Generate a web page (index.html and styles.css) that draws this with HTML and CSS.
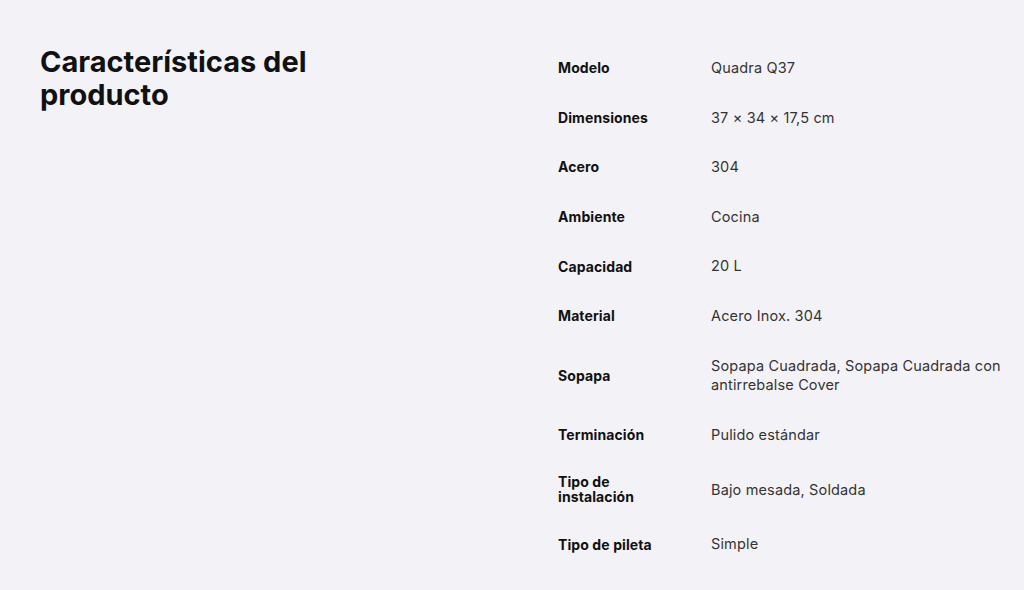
FILE: index.html
```html
<!DOCTYPE html>
<html lang="es">
<head>
<meta charset="utf-8">
<link rel="stylesheet" href="styles.css">
</head>
<body>
<main class="specs">
  <h2 class="specs-title">Características del producto</h2>
  <dl class="specs-table">
    <div class="row"><dt>Modelo</dt><dd>Quadra Q37</dd></div>
    <div class="row"><dt>Dimensiones</dt><dd>37 × 34 × 17,5 cm</dd></div>
    <div class="row"><dt>Acero</dt><dd>304</dd></div>
    <div class="row"><dt>Ambiente</dt><dd>Cocina</dd></div>
    <div class="row"><dt>Capacidad</dt><dd>20 L</dd></div>
    <div class="row"><dt>Material</dt><dd>Acero Inox. 304</dd></div>
    <div class="row"><dt>Sopapa</dt><dd>Sopapa Cuadrada, Sopapa Cuadrada con antirrebalse Cover</dd></div>
    <div class="row"><dt>Terminación</dt><dd>Pulido estándar</dd></div>
    <div class="row"><dt>Tipo de instalación</dt><dd>Bajo mesada, Soldada</dd></div>
    <div class="row"><dt>Tipo de pileta</dt><dd>Simple</dd></div>
  </dl>
</main>
</body>
</html>
```
FILE: styles.css
```css
html, body {
  margin: 0;
  padding: 0;
  background: #f3f3f7;
}
body {
  font-family: Inter, "Noto Sans", sans-serif;
  color: #111;
}
.specs {
  display: grid;
  grid-template-columns: 518px 1fr;
  padding: 43px 10px 0 40px;
}
.specs-title {
  margin: 2px 0 0;
  font-size: 29px;
  line-height: 33px;
  font-weight: 700;
  letter-spacing: 0;
  width: 300px;
}
.specs-table {
  margin: 0;
}
.row {
  display: grid;
  grid-template-columns: 110px 1fr;
  column-gap: 43px;
  align-items: center;
  padding: 15px 0;
}
.row dt {
  font-size: 14px;
  font-weight: 700;
  line-height: 15px;
  letter-spacing: 0.1px;
  color: #111;
}
.row dd {
  margin: 0;
  font-size: 14.5px;
  line-height: 19.6px;
  letter-spacing: 0.15px;
  color: #333;
  max-width: 300px;
}
```
